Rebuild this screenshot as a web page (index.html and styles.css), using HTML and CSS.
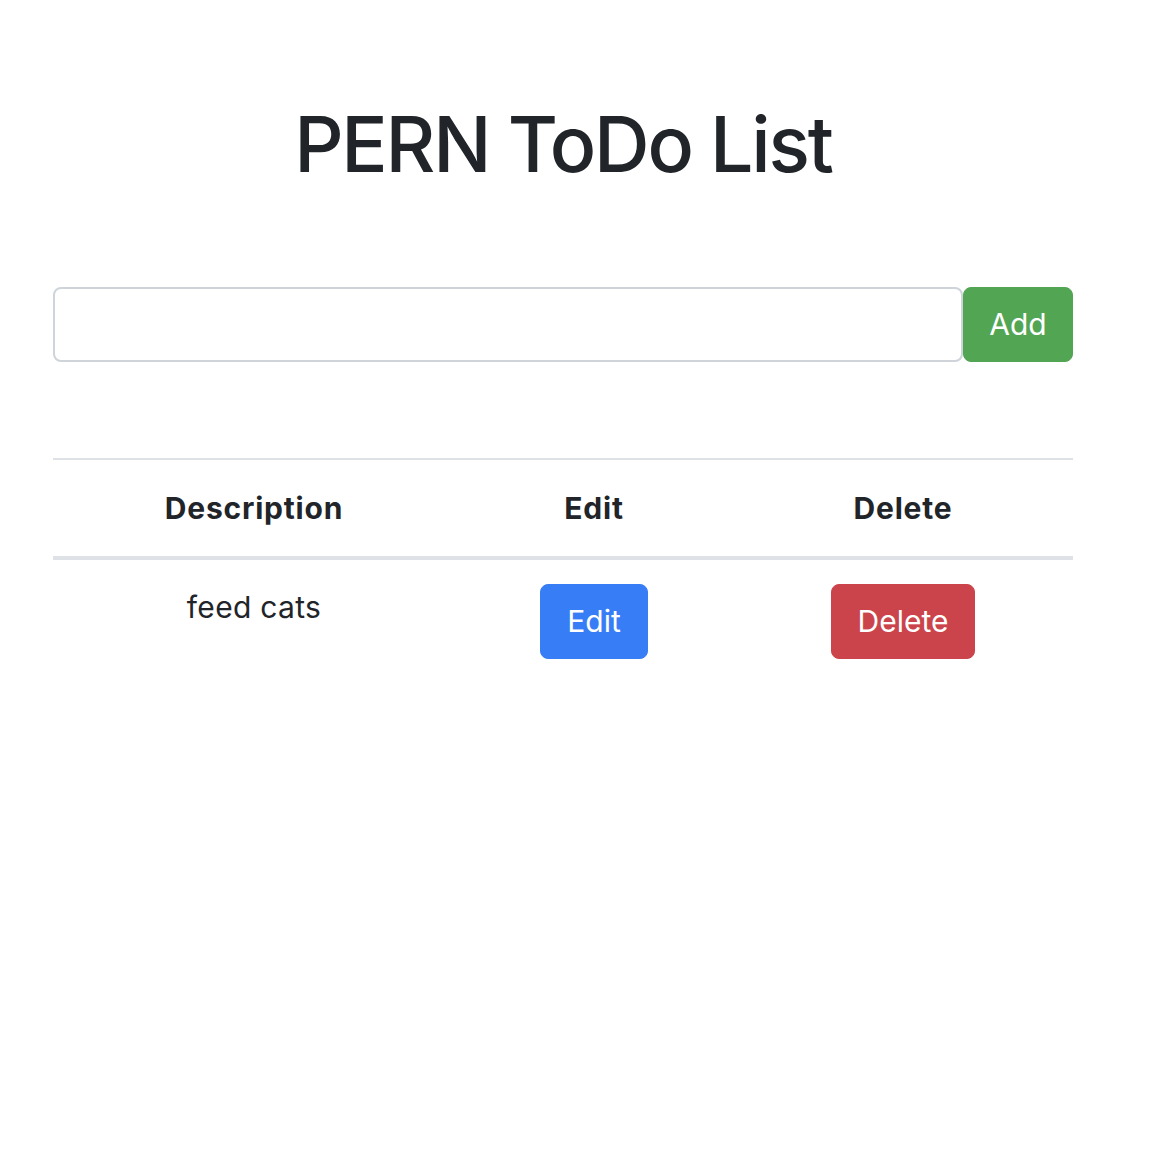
FILE: index.html
```html
<!DOCTYPE html>
<html lang="en">
<head>
<meta charset="utf-8">
<title>PERN ToDo List</title>
<link rel="stylesheet" href="styles.css">
</head>
<body>
<div class="container">
  <h1 class="title">PERN ToDo List</h1>
  <form class="add-form">
    <input class="form-control" type="text">
    <button class="btn btn-success" type="button">Add</button>
  </form>
  <table class="table">
    <thead>
      <tr>
        <th class="col-desc">Description</th>
        <th class="col-edit">Edit</th>
        <th class="col-del">Delete</th>
      </tr>
    </thead>
    <tbody>
      <tr>
        <td class="desc-cell">feed cats</td>
        <td><button class="btn btn-primary" type="button">Edit</button></td>
        <td><button class="btn btn-danger" type="button">Delete</button></td>
      </tr>
    </tbody>
  </table>
</div>
</body>
</html>
```
FILE: styles.css
```css
html, body {
  margin: 0;
  padding: 0;
  background: #ffffff;
}
body {
  font-family: Inter, "Noto Sans", "Liberation Sans", sans-serif;
  color: #212529;
  font-size: 30px;
  line-height: 47px;
}
.container {
  width: 1020px;
  margin-left: 53px;
  padding-top: 97px;
}
.title {
  margin: 0;
  text-align: center;
  font-size: 77px;
  font-weight: 500;
  line-height: 94px;
  letter-spacing: -2.2px;
}
.add-form {
  display: flex;
  margin-top: 96px;
}
.form-control {
  flex: 1;
  height: 75px;
  box-sizing: border-box;
  border: 2px solid #ced4da;
  border-radius: 8px;
  padding: 0 23px;
  font: inherit;
  margin: 0;
}
.btn {
  font: inherit;
  color: #ffffff;
  border: 1px solid transparent;
  border-radius: 8px;
  padding: 13px 26px;
  line-height: 47px;
  margin: 0;
  cursor: pointer;
}
.btn-success {
  background: #52a552;
  border-color: #52a552;
  width: 110px;
  padding: 13px 0;
}
.btn-primary {
  background: #377ef6;
  border-color: #377ef6;
}
.btn-danger {
  background: #cb444b;
  border-color: #cb444b;
}
.table {
  width: 100%;
  margin-top: 96px;
  border-collapse: collapse;
  table-layout: fixed;
}
.table th,
.table td {
  box-sizing: border-box;
  text-align: center;
  vertical-align: top;
  padding: 24px 0;
  border-top: 2px solid #dee2e6;
}
.table th {
  font-weight: 700;
  line-height: 48px;
  letter-spacing: 0.8px;
  border-bottom: 4px solid #dee2e6;
}
.table td {
  border-top: none;
}
.desc-cell {
  padding-top: 26px;
  letter-spacing: 0.3px;
}
.col-desc { width: 402px; }
.col-edit { width: 278px; }
.col-del { width: 340px; }
```
